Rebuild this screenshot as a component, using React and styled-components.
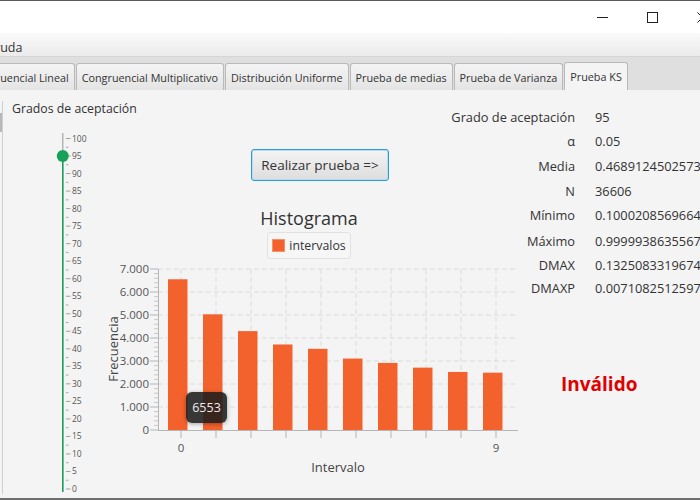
import React from "react";
import styled, { createGlobalStyle } from "styled-components";

const FONT = `"Open Sans", "Noto Sans", "DejaVu Sans", sans-serif`;

const GlobalStyle = createGlobalStyle`
  html, body { margin: 0; padding: 0; background: #f4f4f4; }
  body { font-family: ${FONT}; color: #333; overflow: hidden; }
  * { box-sizing: border-box; }
`;

const Window = styled.div`
  width: 700px;
  height: 500px;
  display: flex;
  flex-direction: column;
  overflow: hidden;
  border-top: 1px solid #5a5a5a;
  border-bottom: 2px solid #6f6f6f;
  background: #f4f4f4;
`;

const TitleBar = styled.div`
  height: 32px;
  flex: none;
  background: #ffffff;
  display: flex;
  justify-content: flex-end;
`;

const WinControls = styled.div`
  display: flex;
  margin-right: -27px;
`;

const WinButton = styled.div`
  width: 50px;
  height: 32px;
  display: flex;
  align-items: center;
  justify-content: center;
`;

const MenuBar = styled.div`
  height: 24px;
  flex: none;
  display: flex;
  align-items: center;
  padding-top: 5px;
  background: linear-gradient(#fafafa, #ebebeb);
  border-bottom: 1px solid #d6d6d6;
`;

const MenuItem = styled.span`
  font-size: 12.5px;
  color: #333;
  margin-left: ${(p) => p.$offset}px;
`;

const TabHeader = styled.div`
  height: 33px;
  flex: none;
  background: #dfdfdf;
  display: flex;
  align-items: flex-end;
  overflow: hidden;
`;

const TabStrip = styled.div`
  display: flex;
  align-items: flex-end;
  gap: 1px;
  margin-left: -36px;
`;

const Tab = styled.div`
  height: ${(p) => (p.$active ? 28 : 27)}px;
  padding: 0 5px;
  display: flex;
  align-items: center;
  font-size: 10.8px;
  white-space: nowrap;
  color: #333;
  border: 1px solid #b9b9b9;
  border-bottom: none;
  border-radius: 3px 3px 0 0;
  background: ${(p) =>
    p.$active ? "#f4f4f4" : "linear-gradient(#f4f4f4, #e4e4e4)"};
`;

const Content = styled.div`
  flex: 1;
  display: flex;
  min-height: 0;
`;

const LeftPane = styled.div`
  width: 100px;
  flex: none;
  display: flex;
`;

const SideEdge = styled.div`
  width: 3px;
  margin: 11px 0 4px;
  border-right: 1px solid #cfcfcf;
  display: flex;
  flex-direction: column;
`;

const SideThumb = styled.div`
  margin-top: 12px;
  height: 19px;
  width: 2px;
  background: #b8b8b8;
`;

const LeftInner = styled.div`
  display: flex;
  flex-direction: column;
  padding-top: 10px;
`;

const Heading = styled.div`
  font-size: 12.3px;
  line-height: 18px;
  padding-left: 9px;
  white-space: nowrap;
  color: #333;
`;

const SliderBox = styled.svg`
  margin: 12px 0 0 37px;
  display: block;
  overflow: visible;
`;

const ChartColumn = styled.div`
  width: 420px;
  flex: none;
  display: flex;
  flex-direction: column;
  align-items: center;
`;

const ActionButton = styled.button`
  align-self: flex-start;
  margin: 59px 0 0 151px;
  width: 138px;
  height: 32px;
  border: 1px solid #2b9cd8;
  box-shadow: inset 0 0 0 1px #b7dcf0;
  border-radius: 3px;
  background: linear-gradient(#f4f4f4, #dddddd);
  font-family: ${FONT};
  font-size: 13.5px;
  color: #333;
  padding: 0;
`;

const ChartTitle = styled.div`
  margin-top: 25px;
  font-size: 18px;
  line-height: 24px;
  color: #333;
  transform: translateX(-1px);
`;

const Legend = styled.div`
  margin-top: 2px;
  height: 27px;
  padding: 0 4px;
  display: inline-flex;
  align-items: center;
  gap: 4px;
  border: 1px solid #e2e2e2;
  border-radius: 3px;
  background: #f6f6f6;
  font-size: 12.3px;
  transform: translateX(-1px);
`;

const Swatch = styled.span`
  width: 13px;
  height: 13px;
  background: #f3622d;
  border: 1px solid #f7906b;
`;

const ChartArea = styled.div`
  position: relative;
  margin-top: 3px;
  width: 420px;
  height: 218px;
`;

const Tooltip = styled.div`
  position: absolute;
  left: 86px;
  top: 130px;
  width: 41px;
  height: 31px;
  border-radius: 6px;
  background: rgba(28, 28, 28, 0.88);
  box-shadow: 0 1px 4px rgba(0, 0, 0, 0.35);
  color: #ececec;
  font-size: 12.5px;
  display: flex;
  align-items: center;
  justify-content: center;
`;

const StatsColumn = styled.div`
  flex: 1;
  display: flex;
  flex-direction: column;
  padding-top: 16px;
  min-width: 0;
`;

const StatRow = styled.div`
  height: ${(p) => p.$h}px;
  display: flex;
  align-items: center;
  gap: 20px;
  font-size: 12.8px;
  white-space: nowrap;
`;

const StatLabel = styled.div`
  width: 55px;
  flex: none;
  display: flex;
  justify-content: flex-end;
`;

const StatValue = styled.div`
  color: #333;
`;

const Verdict = styled.div`
  margin: 72px 0 0 41px;
  font-size: 19px;
  line-height: 24px;
  font-weight: 700;
  color: #e00000;
`;

const TABS = [
  "Congruencial Lineal",
  "Congruencial Multiplicativo",
  "Distribución Uniforme",
  "Prueba de medias",
  "Prueba de Varianza",
  "Prueba KS",
];

const STATS = [
  ["Grado de aceptación", "95", 22.5],
  ["α", "0.05", 24.5],
  ["Media", "0.46891245025734", 25.5],
  ["N", "36606", 24],
  ["Mínimo", "0.10002085696644", 25.5],
  ["Máximo", "0.99999386355673", 25],
  ["DMAX", "0.13250833196743", 23],
  ["DMAXP", "0.00710825125978", 24],
];

const BARS = [6553, 5030, 4300, 3718, 3530, 3106, 2917, 2712, 2524, 2493];

function Slider() {
  const yOf = (v) => 8.5 + (100 - v) * 3.505;
  const majors = [];
  for (let v = 100; v >= 0; v -= 5) majors.push(v);
  const minors = [];
  for (let v = 97.5; v > 0; v -= 5) minors.push(v);
  const thumbY = yOf(95);
  return (
    <SliderBox width="60" height="365" viewBox="0 0 60 365">
      <rect x="22" y="3" width="1.5" height={thumbY - 3} fill="#b5b5b5" />
      <rect x="22" y={thumbY} width="1.6" height={362 - thumbY} fill="#16a058" />
      {minors.map((v) => (
        <line key={"m" + v} x1="26" x2="28.5" y1={yOf(v)} y2={yOf(v)} stroke="#a8a8a8" strokeWidth="1" />
      ))}
      {majors.map((v) => (
        <g key={v}>
          <line x1="26" x2="30.5" y1={yOf(v)} y2={yOf(v)} stroke="#a0a0a0" strokeWidth="1" />
          <text x="32" y={yOf(v) + 3} fontSize="8.5" fill="#555" fontFamily={FONT}>
            {v}
          </text>
        </g>
      ))}
      <circle cx="22.75" cy={thumbY} r="6" fill="#16a058" />
    </SliderBox>
  );
}

function Histogram() {
  const yOf = (v) => 168 - v * 0.023;
  const grid = [1000, 2000, 3000, 4000, 5000, 6000, 7000];
  const minorTicks = [];
  for (let v = 200; v < 7000; v += 200) if (v % 1000) minorTicks.push(v);
  const cats = BARS.map((_, k) => 81 + 35 * k);
  return (
    <svg width="420" height="218" viewBox="0 0 420 218" style={{ display: "block" }}>
      {grid.map((v) => (
        <line key={"h" + v} x1="58" x2="418" y1={yOf(v)} y2={yOf(v)} stroke="#dcdcdc" strokeDasharray="5 3" />
      ))}
      {cats.map((x) => (
        <line key={"v" + x} x1={x} x2={x} y1="7" y2="168" stroke="#dcdcdc" strokeDasharray="5 3" />
      ))}
      {BARS.map((v, k) => (
        <rect key={k} x={68 + 35 * k} y={yOf(v)} width="19.5" height={168 - yOf(v)} fill="#f3622d" />
      ))}
      <line x1="58.5" x2="58.5" y1="7" y2="168" stroke="#b5b5b5" />
      <line x1="58" x2="418" y1="168.5" y2="168.5" stroke="#b5b5b5" />
      {minorTicks.map((v) => (
        <line key={"t" + v} x1="54" x2="58" y1={yOf(v)} y2={yOf(v)} stroke="#c8c8c8" />
      ))}
      {[0, ...grid].map((v) => (
        <g key={"y" + v}>
          <line x1="50" x2="58" y1={yOf(v)} y2={yOf(v)} stroke="#b5b5b5" />
          <text x="49" y={yOf(v) + 4} fontSize="11.5" textAnchor="end" fill="#555" fontFamily={FONT}>
            {v === 0 ? "0" : `${v / 1000}.000`}
          </text>
        </g>
      ))}
      {cats.map((x) => (
        <line key={"xt" + x} x1={x} x2={x} y1="168" y2="176" stroke="#b5b5b5" />
      ))}
      <text x="81" y="189.5" fontSize="11.5" textAnchor="middle" fill="#555" fontFamily={FONT}>0</text>
      <text x="396" y="189.5" fontSize="11.5" textAnchor="middle" fill="#555" fontFamily={FONT}>9</text>
      <text x="238" y="209.5" fontSize="13" textAnchor="middle" fill="#444" fontFamily={FONT}>Intervalo</text>
      <text
        x="0"
        y="0"
        fontSize="13"
        textAnchor="middle"
        fill="#444"
        fontFamily={FONT}
        transform="translate(17.5 87) rotate(-90)"
      >
        Frecuencia
      </text>
    </svg>
  );
}

export default function App() {
  return (
    <>
      <GlobalStyle />
      <Window>
        <TitleBar>
          <WinControls>
            <WinButton>
              <svg width="11" height="11" viewBox="0 0 11 11">
                <line x1="0" x2="11" y1="5.5" y2="5.5" stroke="#222" strokeWidth="1" />
              </svg>
            </WinButton>
            <WinButton>
              <svg width="11" height="11" viewBox="0 0 11 11">
                <rect x="0.5" y="0.5" width="10" height="10" fill="none" stroke="#222" strokeWidth="1" />
              </svg>
            </WinButton>
            <WinButton>
              <svg width="11" height="11" viewBox="0 0 11 11">
                <path d="M0.5 0.5 L10.5 10.5 M10.5 0.5 L0.5 10.5" stroke="#222" strokeWidth="1" />
              </svg>
            </WinButton>
          </WinControls>
        </TitleBar>
        <MenuBar>
          <MenuItem $offset={-14}>Ayuda</MenuItem>
        </MenuBar>
        <TabHeader>
          <TabStrip>
            {TABS.map((t, i) => (
              <Tab key={t} $active={i === TABS.length - 1}>
                {t}
              </Tab>
            ))}
          </TabStrip>
        </TabHeader>
        <Content>
          <LeftPane>
            <SideEdge>
              <SideThumb />
            </SideEdge>
            <LeftInner>
              <Heading>Grados de aceptación</Heading>
              <Slider />
            </LeftInner>
          </LeftPane>
          <ChartColumn>
            <ActionButton>Realizar prueba =&gt;</ActionButton>
            <ChartTitle>Histograma</ChartTitle>
            <Legend>
              <Swatch />
              intervalos
            </Legend>
            <ChartArea>
              <Histogram />
              <Tooltip>6553</Tooltip>
            </ChartArea>
          </ChartColumn>
          <StatsColumn>
            {STATS.map(([l, v, h]) => (
              <StatRow key={l} $h={h}>
                <StatLabel>{l}</StatLabel>
                <StatValue>{v}</StatValue>
              </StatRow>
            ))}
            <Verdict>Inválido</Verdict>
          </StatsColumn>
        </Content>
      </Window>
    </>
  );
}
